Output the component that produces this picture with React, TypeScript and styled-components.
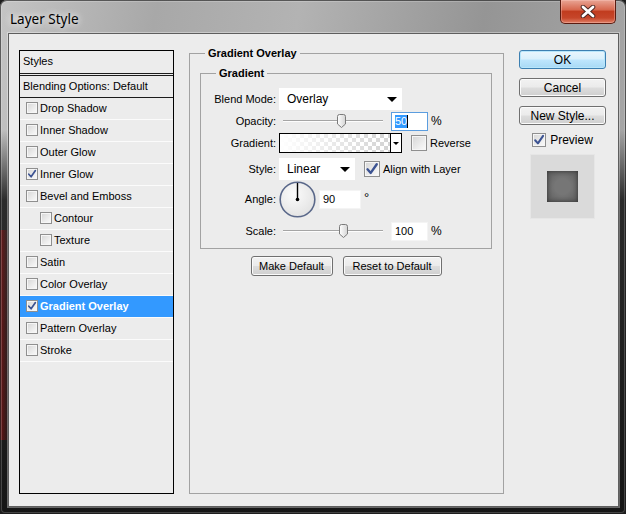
import styled, { createGlobalStyle } from 'styled-components';

const GlobalStyle = createGlobalStyle`
  html, body {
    margin: 0;
    padding: 0;
    background: #1d1d1d;
  }
  body {
    font-family: "Liberation Sans", Arial, sans-serif;
    font-size: 11px;
    color: #000;
  }
  * {
    box-sizing: border-box;
  }
`;

const Window = styled.div`
  width: 626px;
  height: 514px;
  display: flex;
  flex-direction: column;
  padding: 0 7px 7px 8px;
  border-radius: 7px 7px 5px 5px;
  background:
    linear-gradient(to right, rgba(125, 18, 18, 0.8) 0, rgba(125, 18, 18, 0) 9px) 0 230px / 100% 210px no-repeat,
    linear-gradient(to bottom, rgba(28, 28, 28, 0) 130px, rgba(32, 32, 32, 0.92) 200px, #151515 100%),
    linear-gradient(100deg, #c4c4c4 0%, #a8a8a8 22%, #b3b3b3 42%, #959595 68%, #adadad 100%);
  box-shadow: inset 0 0 0 1px rgba(0, 0, 0, 0.55), inset 0 0 0 2px rgba(255, 255, 255, 0.2);
`;

const TitleBar = styled.div`
  height: 33px;
  flex-shrink: 0;
  display: flex;
  align-items: flex-start;
`;

const Title = styled.div`
  padding: 10px 0 0 2px;
  font-family: "Noto Sans", "Liberation Sans", sans-serif;
  font-size: 13.5px;
  line-height: 18px;
  color: #000;
  text-shadow: 0 0 6px rgba(255, 255, 255, 0.9), 0 0 10px rgba(255, 255, 255, 0.7);
`;

const CloseButton = styled.div`
  margin-left: auto;
  margin-right: 3px;
  width: 56px;
  height: 24px;
  display: flex;
  align-items: center;
  justify-content: center;
  border: 1px solid #5a1b10;
  border-top: none;
  border-radius: 0 0 5px 5px;
  background: linear-gradient(#e9a595 0%, #d7684f 42%, #c13c1f 50%, #c6462a 78%, #e07f66 100%);
  box-shadow: inset 0 0 0 1px rgba(255, 210, 200, 0.35);
`;

const Client = styled.div`
  flex: 1;
  display: flex;
  align-items: flex-start;
  padding: 12px 0 0 10px;
  background: #ececec;
  border: 1px solid #5e5e5e;
  box-shadow: 0 0 0 1px rgba(255, 255, 255, 0.35);
`;

/* styles list */

const StylesList = styled.div`
  width: 155px;
  height: 444px;
  margin-top: 4px;
  border: 1px solid #000;
  flex-shrink: 0;
`;

const ListHeader = styled.div`
  height: 25px;
  padding: 0 0 0 3px;
  line-height: 21px;
  border-bottom: 3px double #1c1c1c;
`;

const BlendingRow = styled.div`
  height: 22px;
  padding-left: 3px;
  line-height: 21px;
  border-bottom: 1px solid #1c1c1c;
`;

const StyleItem = styled.div<{ $indent?: boolean; $selected?: boolean }>`
  height: 22px;
  display: flex;
  align-items: center;
  gap: 2px;
  padding: 0 0 1px ${p => (p.$indent ? 20 : 6)}px;
  border-bottom: 1px solid #fbfbfb;
  background: ${p => (p.$selected ? '#3399ff' : 'transparent')};
  color: ${p => (p.$selected ? '#fff' : '#000')};
  font-weight: ${p => (p.$selected ? 'bold' : 'normal')};
`;

/* checkbox */

const Box = styled.span<{ $size: number }>`
  display: inline-flex;
  align-items: center;
  justify-content: center;
  flex-shrink: 0;
  width: ${p => p.$size}px;
  height: ${p => p.$size}px;
  border: 1px solid #8f8f8f;
  background: linear-gradient(135deg, #d5d5d5 0%, #ededed 60%, #fbfbfb 100%);
  box-shadow: inset 0 0 0 1px #f6f6f6;
`;

function Checkbox({ size = 12, checked = false }: { size?: number; checked?: boolean }) {
  return (
    <Box $size={size}>
      {checked && (
        <svg width={size - 2} height={size - 2} viewBox="0 0 10 10">
          <path d="M1.8 5.2 L4.1 7.8 L8.4 1.6" fill="none" stroke="#3c5392" strokeWidth="1.7" strokeLinecap="round" strokeLinejoin="round" />
        </svg>
      )}
    </Box>
  );
}

/* middle panel */

const OuterFieldset = styled.fieldset`
  margin: 0 0 0 15px;
  width: 315px;
  height: 448px;
  flex-shrink: 0;
  min-width: 0;
  padding: 6px 11px 0 10px;
  border: 1px solid #a2a2a2;
`;

const InnerFieldset = styled.fieldset`
  margin: 0;
  width: 292px;
  min-width: 0;
  padding: 8px 0 0 0;
  border: 1px solid #a2a2a2;
`;

const Legend = styled.legend<{ $offset: number }>`
  margin-left: ${p => p.$offset}px;
  padding: 0 3px;
  font-weight: bold;
  font-size: 11px;
  line-height: 14px;
`;

const Row = styled.div<{ $h: number }>`
  height: ${p => p.$h}px;
  display: flex;
  align-items: center;
`;

const Label = styled.span`
  width: 75px;
  margin-right: 3px;
  text-align: right;
  flex-shrink: 0;
`;

const Select = styled.div<{ $w: number }>`
  width: ${p => p.$w}px;
  height: 22px;
  display: flex;
  align-items: center;
  justify-content: space-between;
  padding: 0 5px 0 8px;
  background: #fff;
  font-size: 12px;
  flex-shrink: 0;
`;

const SliderBox = styled.div`
  position: relative;
  width: 104px;
  height: 16px;
  margin-right: 8px;
  padding-left: 4px;
  display: flex;
  align-items: center;
  flex-shrink: 0;
`;

const Track = styled.div`
  flex: 1;
  height: 2px;
  border-top: 1px solid #a5a5a5;
  border-bottom: 1px solid #fdfdfd;
`;

const Thumb = styled.svg`
  position: absolute;
  top: 1px;
`;

const ValueBox = styled.div<{ $w: number; $focused?: boolean }>`
  width: ${p => p.$w}px;
  height: 19px;
  display: flex;
  align-items: center;
  padding-left: 3px;
  background: #fff;
  border: 1px solid ${p => (p.$focused ? '#5b9ddf' : '#f4f4f4')};
  flex-shrink: 0;
`;

const Selection = styled.span`
  background: #3399ff;
  color: #fff;
  line-height: 13px;
`;

const Caret = styled.span`
  width: 1px;
  height: 13px;
  background: #000;
`;

const Unit = styled.span`
  margin-left: 3px;
  font-size: 12px;
`;

const Degree = styled.span`
  margin: 0 0 4px 3px;
  font-size: 13px;
`;

const GradientSwatch = styled.div`
  width: 123px;
  height: 20px;
  margin-right: 9px;
  display: flex;
  border: 1px solid #000;
  flex-shrink: 0;
`;

const GradientFill = styled.div`
  flex: 1;
  background:
    linear-gradient(to right, #fff 0%, rgba(255, 255, 255, 0) 100%),
    repeating-conic-gradient(#d3d3d3 0 25%, #ffffff 0 50%) 0 0 / 8px 8px;
`;

const GradientDrop = styled.div`
  width: 11px;
  display: flex;
  align-items: center;
  justify-content: center;
  border-left: 1px solid #000;
  background: #fff;
`;

const CheckLabel = styled.label`
  display: flex;
  align-items: center;
  gap: 3px;
`;

const ButtonRow = styled.div`
  display: flex;
  justify-content: center;
  gap: 10px;
  margin-top: 7px;
`;

const Button = styled.button<{ $w: number; $primary?: boolean; $size?: number }>`
  width: ${p => p.$w}px;
  height: ${p => (p.$size ? 19 : 20)}px;
  padding: 0;
  font-family: inherit;
  font-size: ${p => p.$size ?? 11}px;
  color: #000;
  border-radius: 3px;
  border: 1px solid ${p => (p.$primary ? '#3c7fb1' : '#707070')};
  background: ${p =>
    p.$primary
      ? 'linear-gradient(#eaf6fd 0%, #d9f0fc 48%, #bee6fd 52%, #a7d9f5 100%)'
      : 'linear-gradient(#f2f2f2 0%, #ebebeb 48%, #dddddd 52%, #cfcfcf 100%)'};
  box-shadow: inset 0 0 0 1px ${p => (p.$primary ? '#b8e6fb' : '#fbfbfb')};
  flex-shrink: 0;
`;

/* right column */

const RightColumn = styled.div`
  width: 87px;
  margin: 4px 0 0 15px;
  display: flex;
  flex-direction: column;
  align-items: center;
  gap: 9px;
  flex-shrink: 0;
`;

const PreviewToggle = styled.label`
  display: flex;
  align-items: center;
  gap: 4px;
  margin-top: -1px;
  height: 14px;
  font-size: 12px;
`;

const PreviewBox = styled.div`
  width: 65px;
  height: 65px;
  margin-top: -2px;
  display: flex;
  align-items: center;
  justify-content: center;
  background: #dadada;
  border: 1px solid #e6e6e6;
`;

const PreviewSwatch = styled.div`
  width: 31px;
  height: 31px;
  background: radial-gradient(circle, #767676 35%, #5a5a5a 100%);
  box-shadow: inset 0 0 4px #333;
`;

const styleItems = [
  { name: 'Drop Shadow' },
  { name: 'Inner Shadow' },
  { name: 'Outer Glow' },
  { name: 'Inner Glow', checked: true },
  { name: 'Bevel and Emboss' },
  { name: 'Contour', indent: true },
  { name: 'Texture', indent: true },
  { name: 'Satin' },
  { name: 'Color Overlay' },
  { name: 'Gradient Overlay', checked: true, selected: true },
  { name: 'Pattern Overlay' },
  { name: 'Stroke' },
];

function DownArrow({ w = 10, h = 5 }: { w?: number; h?: number }) {
  return (
    <svg width={w} height={h} viewBox={`0 0 ${w} ${h}`}>
      <path d={`M0 0 L${w} 0 L${w / 2} ${h} Z`} fill="#000" />
    </svg>
  );
}

function Slider({ pos }: { pos: number }) {
  return (
    <SliderBox>
      <Track />
      <Thumb width="9" height="14" viewBox="0 0 9 14" style={{ left: 4 + pos * 98 - 4.5 }}>
        <defs>
          <linearGradient id="thumb" x1="0" y1="0" x2="1" y2="0">
            <stop offset="0" stopColor="#ffffff" />
            <stop offset="1" stopColor="#d4d4d4" />
          </linearGradient>
        </defs>
        <path d="M0.5 2.5 Q0.5 0.5 2.5 0.5 L6.5 0.5 Q8.5 0.5 8.5 2.5 L8.5 10 L4.5 13.5 L0.5 10 Z" fill="url(#thumb)" stroke="#7b7b7b" />
      </Thumb>
    </SliderBox>
  );
}

function AngleDial() {
  return (
    <svg width="37" height="37" viewBox="0 0 37 37" style={{ marginRight: 3, flexShrink: 0 }}>
      <defs>
        <radialGradient id="dial" cx="0.4" cy="0.35" r="0.7">
          <stop offset="0" stopColor="#fbfbfb" />
          <stop offset="1" stopColor="#e2e2e2" />
        </radialGradient>
      </defs>
      <circle cx="18.5" cy="18.5" r="17.3" fill="url(#dial)" stroke="#5a688a" strokeWidth="1.6" />
      <line x1="18.5" y1="18.5" x2="18.5" y2="2" stroke="#000" strokeWidth="1.4" />
      <circle cx="18.5" cy="18.5" r="1.8" fill="#000" />
    </svg>
  );
}

export default function App() {
  return (
    <>
      <GlobalStyle />
      <Window>
        <TitleBar>
          <Title>Layer Style</Title>
          <CloseButton>
            <svg width="16" height="13" viewBox="0 0 16 13">
              <path d="M3 2 L13 11 M13 2 L3 11" stroke="#4a2520" strokeWidth="4.6" strokeLinecap="round" />
              <path d="M3 2 L13 11 M13 2 L3 11" stroke="#fff" strokeWidth="2.8" strokeLinecap="round" />
            </svg>
          </CloseButton>
        </TitleBar>

        <Client>
          <StylesList>
            <ListHeader>Styles</ListHeader>
            <BlendingRow>Blending Options: Default</BlendingRow>
            {styleItems.map(item => (
              <StyleItem key={item.name} $indent={item.indent} $selected={item.selected}>
                <Checkbox size={12} checked={item.checked} />
                {item.name}
              </StyleItem>
            ))}
          </StylesList>

          <OuterFieldset>
            <Legend $offset={5}>Gradient Overlay</Legend>
            <InnerFieldset>
              <Legend $offset={15}>Gradient</Legend>
              <Row $h={22}>
                <Label>Blend Mode:</Label>
                <Select $w={123}>
                  Overlay
                  <DownArrow />
                </Select>
              </Row>
              <Row $h={22}>
                <Label>Opacity:</Label>
                <Slider pos={0.6} />
                <ValueBox $w={37} $focused>
                  <Selection>50</Selection>
                  <Caret />
                </ValueBox>
                <Unit>%</Unit>
              </Row>
              <Row $h={22}>
                <Label>Gradient:</Label>
                <GradientSwatch>
                  <GradientFill />
                  <GradientDrop>
                    <DownArrow w={6} h={3} />
                  </GradientDrop>
                </GradientSwatch>
                <CheckLabel>
                  <Checkbox size={16} />
                  Reverse
                </CheckLabel>
              </Row>
              <Row $h={30}>
                <Label>Style:</Label>
                <Select $w={76} style={{ marginRight: 9 }}>
                  Linear
                  <DownArrow />
                </Select>
                <CheckLabel>
                  <Checkbox size={16} checked />
                  Align with Layer
                </CheckLabel>
              </Row>
              <Row $h={30}>
                <Label>Angle:</Label>
                <AngleDial />
                <ValueBox $w={42}>90</ValueBox>
                <Degree>°</Degree>
              </Row>
              <Row $h={34}>
                <Label>Scale:</Label>
                <Slider pos={0.617} />
                <ValueBox $w={37}>100</ValueBox>
                <Unit>%</Unit>
              </Row>
            </InnerFieldset>
            <ButtonRow>
              <Button $w={82}>Make Default</Button>
              <Button $w={99}>Reset to Default</Button>
            </ButtonRow>
          </OuterFieldset>

          <RightColumn>
            <Button $w={87} $size={12} $primary>OK</Button>
            <Button $w={87} $size={12}>Cancel</Button>
            <Button $w={87} $size={12}>New Style...</Button>
            <PreviewToggle>
              <Checkbox size={14} checked />
              Preview
            </PreviewToggle>
            <PreviewBox>
              <PreviewSwatch />
            </PreviewBox>
          </RightColumn>
        </Client>
      </Window>
    </>
  );
}
